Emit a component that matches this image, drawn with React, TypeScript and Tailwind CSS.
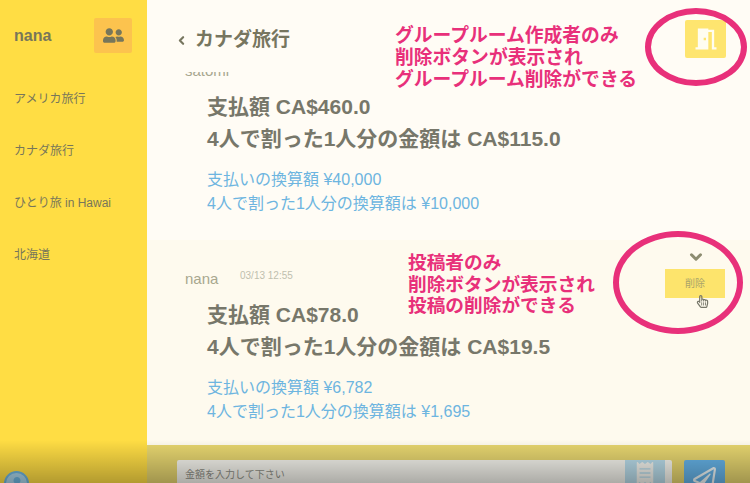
import React from "react";
import { ChevronDown, ChevronLeft } from "lucide-react";
import { FaReceipt, FaRegHandPointer, FaRegPaperPlane, FaUser, FaUserFriends } from "react-icons/fa";
import { MdMeetingRoom } from "react-icons/md";

const font = "font-['Liberation_Sans','Noto_Sans_CJK_JP',sans-serif]";

const groups = ["アメリカ旅行", "カナダ旅行", "ひとり旅 in Hawai", "北海道"];

type Post = {
  name: string;
  time?: string;
  paid: string;
  share: string;
  paidYen: string;
  shareYen: string;
};

function PostRow({ post, className }: { post: Post; className: string }) {
  return (
    <div className={`relative h-[208px] shrink-0 pl-[38px] pt-[29px] ${className}`}>
      <div className="flex h-[20px] items-center">
        <span className="w-[55px] text-[15px] text-[#a8a78f]">{post.name}</span>
        <span className="-mt-[7px] text-[10px] text-[#c0bfae]">{post.time}</span>
      </div>
      <div className="mt-[10px] pl-[22px] text-[21px] font-bold leading-[32px] text-[#77776a]">
        <p>支払額 {post.paid}</p>
        <p>4人で割った1人分の金額は {post.share}</p>
      </div>
      <div className="mt-[13px] pl-[22px] text-[16px] leading-[24px] text-[#6db5e0]">
        <p>支払いの換算額 {post.paidYen}</p>
        <p>4人で割った1人分の換算額は {post.shareYen}</p>
      </div>
    </div>
  );
}

export default function App() {
  return (
    <div className={`relative flex h-[483px] w-[750px] overflow-hidden bg-[#fffcf5] ${font}`}>
      <aside className="w-[147px] shrink-0 bg-[#ffdd44] text-[#77765a]">
        <div className="flex h-[73px] items-center justify-between pl-[14px] pr-[15px]">
          <span className="-mt-[1px] text-[16px] font-bold">nana</span>
          <button className="-mt-[2px] flex h-[35px] w-[38px] items-center justify-center rounded-[2px] bg-[#fcc34e] text-[#77765a]">
            <FaUserFriends size={21} />
          </button>
        </div>
        {groups.map((g) => (
          <div key={g} className="flex h-[52px] items-center pl-[14px] text-[12px]">
            {g}
          </div>
        ))}
      </aside>

      <main className="flex min-w-0 flex-1 flex-col">
        <header className="flex h-[72px] shrink-0 items-center justify-between bg-[#fffcf5] pl-[28px] pr-[24px]">
          <div className="mt-[8px] flex items-center gap-[7px] text-[#77765f]">
            <ChevronLeft size={13} strokeWidth={4} />
            <h1 className="text-[19px] font-bold">カナダ旅行</h1>
          </div>
          <button className="mt-[6px] flex h-[38px] w-[41px] items-center justify-center rounded-[2px] bg-[#fee56f] text-[#fffdf0]">
            <MdMeetingRoom size={28} />
          </button>
        </header>

        <div className="min-h-0 flex-1 overflow-hidden">
          <div className="-mt-[40px]">
            <PostRow
              className="bg-[#fffcf5]"
              post={{
                name: "satomi",
                paid: "CA$460.0",
                share: "CA$115.0",
                paidYen: "¥40,000",
                shareYen: "¥10,000",
              }}
            />
            <PostRow
              className="bg-[#fefaee]"
              post={{
                name: "nana",
                time: "03/13 12:55",
                paid: "CA$78.0",
                share: "CA$19.5",
                paidYen: "¥6,782",
                shareYen: "¥1,695",
              }}
            />
          </div>
        </div>

        <footer className="flex h-[38px] shrink-0 gap-[12px] bg-[#e6d56f] pl-[30px] pr-[25px] pt-[15px]">
          <div className="flex h-[40px] flex-1 justify-between rounded-[2px] bg-[#f6f5ee] pl-[8px] pr-[7px]">
            <span className="pt-[7px] text-[10px] text-[#8d8d84]">金額を入力して下さい</span>
            <span className="flex h-[40px] w-[40px] justify-center bg-[#b9dcea] pt-[2px] text-[#f4f4ee]">
              <FaReceipt size={22} />
            </span>
          </div>
          <button className="flex h-[40px] w-[41px] justify-center rounded-[2px] bg-[#65b2e6] pt-[7px] text-[#eef5f5]">
            <FaRegPaperPlane size={23} />
          </button>
        </footer>
      </main>

      {/* avatar in the sidebar corner, cut by the window */}
      <div className="absolute left-[4px] top-[471px] flex h-[25px] w-[25px] items-center justify-center overflow-hidden rounded-full border-[2px] border-[#6db5e0] bg-[#a9d4ea] text-[#6db5e0]">
        <FaUser size={14} />
      </div>

      {/* delete menu on the post */}
      <ChevronDown size={18} strokeWidth={4} className="absolute left-[687px] top-[248px] text-[#8c8c70]" />
      <div className="absolute left-[665px] top-[269px] flex h-[29px] w-[60px] items-center justify-center bg-[#fde46c] text-[10px] text-[#a8a36a]">
        削除
      </div>
      <FaRegHandPointer size={13} className="absolute left-[696px] top-[295px] text-[#77776a]" />

      {/* video fade along the bottom */}
      <div className="pointer-events-none absolute inset-x-0 bottom-0 h-[43px] bg-gradient-to-b from-black/0 to-black/30" />

      {/* pink annotations */}
      <div className="absolute left-[395px] top-[25px] text-[18.8px] font-bold leading-[22px] text-[#e8307a]">
        <p>グループルーム作成者のみ</p>
        <p>削除ボタンが表示され</p>
        <p>グループルーム削除ができる</p>
      </div>
      <div className="absolute left-[408px] top-[252px] text-[18.7px] font-bold leading-[21.5px] text-[#e8307a]">
        <p>投稿者のみ</p>
        <p>削除ボタンが表示され</p>
        <p>投稿の削除ができる</p>
      </div>
      <div className="absolute left-[645px] top-[8px] h-[78px] w-[102px] rounded-[50%] border-[6px] border-[#e8307a]" />
      <div className="absolute left-[613px] top-[231px] h-[103px] w-[130px] rounded-[50%] border-[6px] border-[#e8307a]" />
    </div>
  );
}
